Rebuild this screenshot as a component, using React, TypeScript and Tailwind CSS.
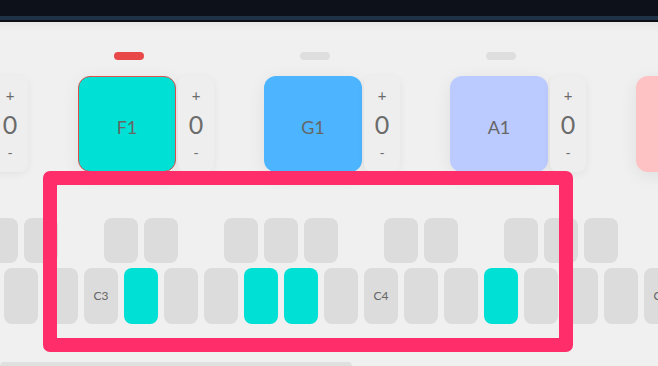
import React from 'react';

type Pad = { note: string; color: string; active?: boolean };

const pads: Pad[] = [
  { note: 'E1', color: 'bg-[#ffc2c4]' },
  { note: 'F1', color: 'bg-[#00e0d5]', active: true },
  { note: 'G1', color: 'bg-[#4db5ff]' },
  { note: 'A1', color: 'bg-[#bccbff]' },
  { note: 'B1', color: 'bg-[#ffc2c4]' },
];

// white keys from G2 onwards
const whiteKeys = ['G2', 'A2', 'B2', 'C3', 'D3', 'E3', 'F3', 'G3', 'A3', 'B3', 'C4', 'D4', 'E4', 'F4', 'G4', 'A4', 'B4', 'C5', 'D5'];
const litKeys = ['D3', 'G3', 'A3', 'F4'];
// black keys after each white key, null where there is none
const blackKeys = ['G#2', 'A#2', null, 'C#3', 'D#3', null, 'F#3', 'G#3', 'A#3', null, 'C#4', 'D#4', null, 'F#4', 'G#4', 'A#4', null, 'C#5'];

const Stepper: React.FC = () => (
  <div className="ml-[2px] w-[36px] h-[96px] rounded-lg bg-[#eeeeee] shadow-[0_2px_8px_rgba(0,0,0,0.06)] flex flex-col items-center justify-between py-[12px] text-[#6b6b6b]">
    <span className="text-[15px] leading-none">+</span>
    <span className="text-[25px] leading-none">0</span>
    <span className="text-[14px] leading-none">-</span>
  </div>
);

const PadUnit: React.FC<{ pad: Pad }> = ({ pad }) => (
  <div className="w-[186px] shrink-0 flex flex-col">
    <div className="h-[8px] ml-[36px] mb-[16px]">
      <div className={`w-[30px] h-[8px] rounded-full ${pad.active ? 'bg-[#e84848]' : 'bg-[#dedede]'}`} />
    </div>
    <div className="flex items-start">
      <div
        className={`w-[98px] h-[96px] rounded-[12px] flex items-center justify-center pt-[6px] text-[18px] text-[#666666] shadow-[0_4px_18px_rgba(0,0,0,0.07)] ${pad.color} ${
          pad.active ? 'border-[1.5px] border-[#d9534f]' : ''
        }`}
      >
        {pad.note}
      </div>
      <Stepper />
    </div>
  </div>
);

export default function App() {
  return (
    <div className="w-[658px] h-[366px] overflow-hidden relative bg-[#f0f0f0]" style={{ fontFamily: 'Lato, "Open Sans", sans-serif' }}>
      <div className="h-[16px] bg-[#0d111a]" />
      <div className="h-[4px] bg-[#1f3347]" />
      <div className="h-[2px] bg-[#0b0d12]" />
      <div className="bg-gradient-to-b from-[#e6e6e6] to-[#f0f0f0] h-[10px]" />

      <div className="flex ml-[-108px] mt-[20px]">
        {pads.map((p) => (
          <PadUnit key={p.note} pad={p} />
        ))}
      </div>

      <div className="mt-[46px] flex flex-col gap-[5px]">
        <div className="flex gap-[6px] ml-[-16px]">
          {blackKeys.map((k, i) => (
            <div key={i} className={`w-[34px] h-[45px] shrink-0 rounded-lg ${k ? 'bg-[#dcdcdc]' : ''}`} />
          ))}
        </div>
        <div className="flex gap-[6px] ml-[-36px]">
          {whiteKeys.map((k) => (
            <div
              key={k}
              className={`w-[34px] h-[56px] shrink-0 rounded-lg flex items-center justify-center text-[12px] text-[#666666] ${
                litKeys.includes(k) ? 'bg-[#00e0d5]' : 'bg-[#dcdcdc]'
              }`}
            >
              {k.startsWith('C') ? k : ''}
            </div>
          ))}
        </div>
      </div>

      <div className="absolute left-0 bottom-0 w-[352px] h-[4px] rounded-t-sm bg-[#e0e0e0]" />

      <div className="absolute left-[43px] top-[171px] w-[530px] h-[181px] border-[14px] border-[#ff2d6a] rounded-[7px]" />
    </div>
  );
}
